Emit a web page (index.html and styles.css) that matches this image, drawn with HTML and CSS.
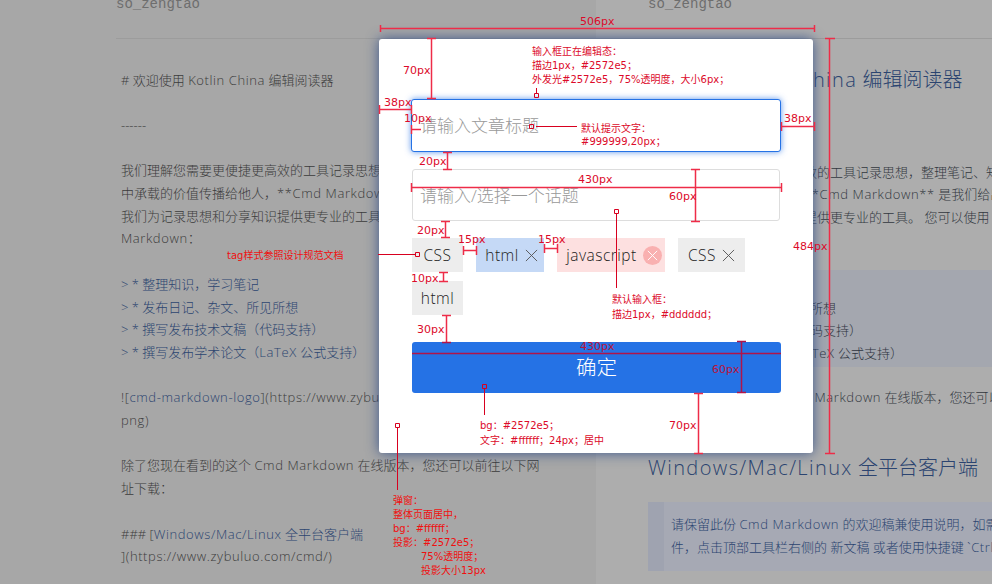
FILE: index.html
```html
<!DOCTYPE html>
<html lang="zh-CN">
<head>
<meta charset="utf-8">
<title>弹窗标注</title>
<link rel="stylesheet" href="styles.css">
</head>
<body>
<div class="page">
  <section class="col col-left">
    <header class="doc-head">so_zengtao</header>
    <div class="source">
      <p># 欢迎使用 <span class="lat">Kotlin China</span> 编辑阅读器</p>
      <p>------</p>
      <p>我们理解您需要更便捷更高效的工具记录思想&#65292;整理笔记、知识卡片、学习心得&#65292;并把其<br>中承载的价值传播给他人&#65292;<span class="lat">**Cmd Markdown**</span> 是我们给出的答案 —— <br>我们为记录思想和分享知识提供更专业的工具。 您可以使用 <span class="lat">Cmd</span><br><span class="lat">Markdown</span>&#65306;</p>
      <p class="src-quote">&gt; * 整理知识&#65292;学习笔记<br>&gt; * 发布日记、杂文、所见所想<br>&gt; * 撰写发布技术文稿&#65288;代码支持&#65289;<br>&gt; * 撰写发布学术论文&#65288;<span class="lat">LaTeX</span> 公式支持&#65289;</p>
      <p class="lat">![<span class="link">cmd-markdown-logo</span>](https://www.zybuluo.com/static/img/logo.<br>png)</p>
      <p>除了您现在看到的这个 <span class="lat">Cmd Markdown</span> 在线版本&#65292;您还可以前往以下网<br>址下载&#65306;</p>
      <p>### [<span class="link"><span class="lat">Windows/Mac/Linux</span> 全平台客户端</span><br><span class="lat">](https://www.zybuluo.com/cmd/)</span></p>
    </div>
  </section>
  <section class="col col-right">
    <header class="doc-head">so_zengtao</header>
    <div class="preview">
      <h1 class="title">欢迎使用 <span class="wide">Kotlin China</span> 编辑阅读器</h1>
      <p class="intro">我们理解您需要更便捷更高效的工具记录思想&#65292;整理笔记、知识卡片、学习心得&#65292;并把其<br>中承载的价值传播给他人&#65292;<span class="lat">**Cmd Markdown**</span> 是我们给出的答案 —— <br>我们为记录思想和分享知识提供更专业的工具。 您可以使用 <span class="lat">Cmd</span><br><span class="lat">Markdown</span>&#65306;</p>
      <ul class="quote-list">
        <li>整理知识&#65292;学习笔记</li>
        <li>发布日记、杂文、所见所想</li>
        <li>撰写发布技术文稿&#65288;代码支持&#65289;</li>
        <li>撰写发布学术论文&#65288;<span class="lat">LaTeX</span> 公式支持&#65289;</li>
      </ul>
      <p class="after">除了您现在看到的这个 <span class="lat">Cmd Markdown</span> 在线版本&#65292;您还可以前往以下网<br>址下载&#65306;</p>
      <h2 class="title title-two"><span class="wide">Windows/Mac/Linux</span> 全平台客户端</h2>
      <blockquote class="note">请保留此份 <span class="lat">Cmd Markdown</span> 的欢迎稿兼使用说明&#65292;如需撰写新稿<br>件&#65292;点击顶部工具栏右侧的 新文稿 或者使用快捷键 <span class="lat">`Ctrl+Alt+N`</span>。</blockquote>
    </div>
  </section>
</div>

<form class="modal">
  <input class="field field-focus" type="text" placeholder="请输入文章标题">
  <input class="field" type="text" placeholder="请输入/选择一个话题">
  <div class="tags">
    <span class="tag">CSS</span>
    <span class="tag tag-blue tag-close">html
      <svg class="x" viewBox="0 0 14 14"><path d="M1 1 13 13M13 1 1 13"/></svg>
    </span>
    <span class="tag tag-red tag-close">javascript
      <span class="x-round"><svg class="x x-white" viewBox="0 0 14 14"><path d="M2 2 12 12M12 2 2 12"/></svg></span>
    </span>
    <span class="tag tag-close">CSS
      <svg class="x" viewBox="0 0 14 14"><path d="M1 1 13 13M13 1 1 13"/></svg>
    </span>
    <span class="tag">html</span>
  </div>
  <button class="submit" type="button">确定</button>
</form>

<svg class="marks" viewBox="0 0 992 584" aria-label="标注">
  <path class="line" d="M380 28.5H814M380.5 25V32M814.5 25V32
    M431.5 38V99M427 38.5H436M427 98.5H436
    M379 109.5H411M379.500 105V114M411.5 105V114
    M412 129.5H421M411.5 125V134
    M781 126.5H814M781.5 122V131M814.5 122V131
    M447.5 152V169M443 152.5H452M443 169.5H452
    M412 187.5H781M411.5 183V192M781.5 183V192
    M695.5 169V222M691 169.5H700M691 221.5H700
    M445.5 221V238M441 221.5H450M441 237.5H450
    M463 250.5H476M463.5 246V255M476.5 246V255
    M544 248.5H557M544.5 244V253M557.5 244V253
    M443.5 272V281M439 272.5H448M439 281.5H448
    M446.5 315V343M442 315.5H451
    M698.5 393V454M694 393.5H703M694 453.5H703
    M829.5 38V453M825 38.5H835M825 453.5H835"/>
  <path class="line line-on-blue" d="M412 353.5H781M741.5 341V393M737 341.5H746M737 392.5H746M442 342.5H451"/>
  <path class="lead" d="M536.5 88V93M536 126.5H577M378 254.5H415M616.5 214V288M484.5 388V415M397.5 428V490"/>
  <path class="box" d="M534.5 93.500h4v4h-4zM529.500 124.500h4v4h-4zM415.500 252.500h4v4h-4zM614.500 209.500h4v4h-4zM482.500 384.500h4v4h-4zM395.500 423.500h4v4h-4z"/>

  <text class="dim" x="580" y="25">506px</text>
  <text class="dim" x="403" y="74">70px</text>
  <text class="dim" x="384" y="106">38px</text>
  <text class="dim" x="404" y="122">10px</text>
  <text class="dim" x="784" y="122">38px</text>
  <text class="dim" x="419" y="165">20px</text>
  <text class="dim" x="578" y="183">430px</text>
  <text class="dim" x="669" y="200">60px</text>
  <text class="dim" x="417" y="234">20px</text>
  <text class="dim" x="458" y="243">15px</text>
  <text class="dim" x="538" y="243">15px</text>
  <text class="dim" x="793" y="250">484px</text>
  <text class="dim" x="411" y="282">10px</text>
  <text class="dim" x="417" y="333">30px</text>
  <text class="dim dim-dark" x="580" y="350">430px</text>
  <text class="dim dim-dark" x="712" y="373">60px</text>
  <text class="dim" x="669" y="429">70px</text>

  <text class="note-mark"><tspan x="532" y="55">输入框正在编辑态&#65306;</tspan><tspan x="532" y="69">描边1px&#65292;#2572e5&#65307;</tspan><tspan x="532" y="83">外发光#2572e5&#65292;75%透明度&#65292;大小6px&#65307;</tspan></text>
  <text class="note-mark"><tspan x="581" y="132">默认提示文字&#65306;</tspan><tspan x="581" y="145">#999999,20px&#65307;</tspan></text>
  <text class="note-mark"><tspan x="612" y="303">默认输入框&#65306;</tspan><tspan x="612" y="318">描边1px&#65292;#dddddd&#65307;</tspan></text>
  <text class="note-mark"><tspan x="480" y="429">bg&#65306;#2572e5&#65307;</tspan><tspan x="480" y="444">文字&#65306;#ffffff&#65307;24px&#65307;居中</tspan></text>
  <text class="note-mark note-bright" x="227" y="259">tag样式参照设计规范文档</text>
  <text class="note-mark note-bright"><tspan x="393" y="504">弹窗&#65306;</tspan><tspan x="393" y="518">整体页面居中&#65292;</tspan><tspan x="393" y="532">bg&#65306;#ffffff&#65307;</tspan><tspan x="393" y="546">投影&#65306;#2572e5&#65307;</tspan><tspan x="421" y="560">75%透明度&#65307;</tspan><tspan x="421" y="574">投影大小13px</tspan></text>
</svg>
</body>
</html>
```

FILE: styles.css
```css
* { box-sizing: border-box; }

html, body {
  margin: 0;
  height: 584px;
  overflow: hidden;
}

body {
  position: relative;
  background: #a7a7a7;
  color: #3b3b3b;
  font-family: "Open Sans", "Noto Sans CJK SC", sans-serif;
  font-size: 13px;
  font-weight: 300;
  line-height: 22.7px;
}

.page {
  display: grid;
  grid-template-columns: 596px 396px;
  height: 584px;
  overflow: hidden;
}

.col { min-width: 0; white-space: nowrap; overflow: hidden; }
.col-left { background: #a7a7a7; padding-left: 116px; }
.col-right { background: #adadad; padding-left: 52px; }

.doc-head {
  height: 39px;
  border-bottom: 1px solid #9c9c9c;
  font-family: "Liberation Mono", monospace;
  font-size: 14px;
  font-weight: 400;
  line-height: 9px;
  color: #6e6e6e;
}
.col-right .doc-head { margin-left: -52px; padding-left: 52px; }

.lat { letter-spacing: .6px; }

.source { padding: 29.6px 0 0 5px; }
.source p { margin: 0 0 22.7px; }
.src-quote, .link { color: #2c4570; }

.preview { padding-top: 26px; color: #33383f; }
.title {
  margin: 0;
  font-size: 20px;
  font-weight: 300;
  line-height: 30px;
  color: #2b4470;
}
.wide { letter-spacing: 1.4px; }
.intro { margin: 65.6px 0 0; }
.quote-list {
  margin: 18.6px 0 0;
  padding: 4px 0 4px 32px;
  height: 97px;
  list-style: none;
  background: #a4a7af;
  color: #2f3440;
}
.after { margin: 18.6px 0 0; }
.title-two { margin-top: 22px; }
.note {
  margin: 19px 0 0;
  height: 69px;
  padding: 11px 0 0 7px;
  border-left: 16px solid #9fa3b0;
  background: #a6a9b4;
  color: #2b4470;
}

.modal {
  position: absolute;
  left: 379px;
  top: 39px;
  width: 434px;
  height: 414px;
  padding: 60px 32px 0;
  border-radius: 3px;
  background: #fff;
  box-shadow: 0 0 13px rgba(45, 75, 135, .9);
  display: flex;
  flex-direction: column;
}

.field {
  display: block;
  width: 368px;
  height: 52px;
  margin: 0 0 17px 1px;
  padding: 0 7px;
  border: 1px solid #ddd;
  border-radius: 3px;
  background: #fff;
  font: 300 17px/1.2 "Open Sans", "Noto Sans CJK SC", sans-serif;
  outline: none;
}
.field::placeholder { color: #999; opacity: 1; }
.field-focus {
  width: 370px;
  height: 53px;
  margin-left: 0;
  padding: 0 8px;
  border-color: #2572e5;
  box-shadow: 0 0 6px rgba(37, 114, 229, .75);
}

.tags {
  display: flex;
  flex-wrap: wrap;
  gap: 9px 13px;
  width: 369px;
  margin-left: 1px;
  height: 77px;
  margin-bottom: 27px;
}
.tag {
  display: flex;
  align-items: center;
  justify-content: center;
  gap: 6px;
  height: 34px;
  width: 51px;
  background: #ededed;
  color: #222;
  font-size: 15.5px;
  font-weight: 300;
  letter-spacing: .5px;
}
.tag-close { width: 67px; }
.tag-blue { width: 68px; padding-left: 3px; background: #c5d9f6; }
.tag-red { width: 108px; padding-left: 6px; background: #fde0e0; }

.x {
  width: 13px;
  height: 13px;
  fill: none;
  stroke: #555;
  stroke-width: 1;
}
.x-round {
  display: flex;
  align-items: center;
  justify-content: center;
  width: 19px;
  height: 19px;
  border-radius: 50%;
  background: #f9b0b0;
}
.x-white { stroke: #fff; }

.submit {
  width: 369px;
  height: 51px;
  margin-left: 1px;
  border: 0;
  border-radius: 3px;
  background: #2572e5;
  color: #fff;
  font: 300 20.5px/1 "Open Sans", "Noto Sans CJK SC", sans-serif;
  padding: 0;
}

.marks {
  position: absolute;
  left: 0;
  top: 0;
  width: 992px;
  height: 584px;
  pointer-events: none;
}
.line { fill: none; stroke: #ee2c48; stroke-width: 1.5; }
.line-on-blue { stroke: #b0144a; }
.lead { fill: none; stroke: #d8001f; stroke-width: 1; }
.box { fill: none; stroke: #d8001f; stroke-width: 1; }
.dim, .note-mark {
  font-family: "DejaVu Sans", "Noto Sans CJK SC", sans-serif;
  font-weight: 400;
  fill: #dc0a2a;
}
.dim { font-size: 11px; }
.dim-dark { fill: #b8143c; }
.note-mark { font-size: 10px; }
.note-bright { fill: #f01010; }
```
